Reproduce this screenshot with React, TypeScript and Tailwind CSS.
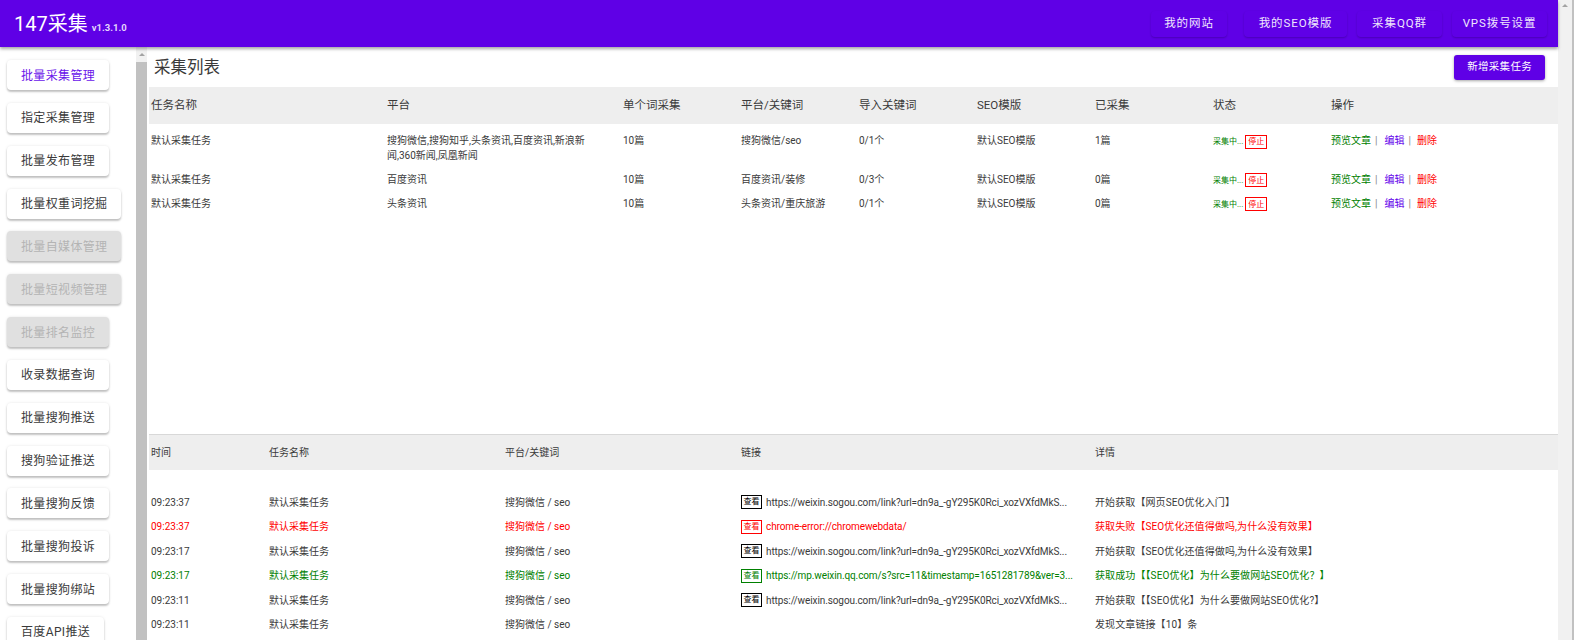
import { ReactNode } from 'react';

const sideItems = [
  { name: '批量采集管理', active: true },
  { name: '指定采集管理' },
  { name: '批量发布管理' },
  { name: '批量权重词挖掘' },
  { name: '批量自媒体管理', disabled: true },
  { name: '批量短视频管理', disabled: true },
  { name: '批量排名监控', disabled: true },
  { name: '收录数据查询' },
  { name: '批量搜狗推送' },
  { name: '搜狗验证推送' },
  { name: '批量搜狗反馈' },
  { name: '批量搜狗投诉' },
  { name: '批量搜狗绑站' },
  { name: '百度API推送' },
];

const topLinks = [
  { name: '我的网站', cls: 'w-[76px] mr-[7px]' },
  { name: '我的SEO模版', cls: 'w-[103px]' },
  { name: '采集QQ群', cls: 'w-[85px]' },
  { name: 'VPS拨号设置', cls: 'w-[95px]' },
];

const tasks = [
  { platform: '搜狗微信,搜狗知乎,头条资讯,百度资讯,新浪新闻,360新闻,凤凰新闻', keyword: '搜狗微信/seo', imported: '0/1个', got: '1篇', cls: 'pt-[9px] pb-[4px]' },
  { platform: '百度资讯', keyword: '百度资讯/装修', imported: '0/3个', got: '0篇', cls: 'py-[4.5px]' },
  { platform: '头条资讯', keyword: '头条资讯/重庆旅游', imported: '0/1个', got: '0篇', cls: 'py-[4.5px]' },
];

const logs = [
  { time: '09:23:37', kw: '搜狗微信 / seo', url: 'https://weixin.sogou.com/link?url=dn9a_-gY295K0Rci_xozVXfdMkS...', detail: '开始获取【网页SEO优化入门】', color: 'text-[#3a3a3a]', tag: 'border-black text-black' },
  { time: '09:23:37', kw: '搜狗微信 / seo', url: 'chrome-error://chromewebdata/', detail: '获取失败【SEO优化还值得做吗,为什么没有效果】', color: 'text-[#f00]', tag: 'border-[#f00] text-[#f00]' },
  { time: '09:23:17', kw: '搜狗微信 / seo', url: 'https://weixin.sogou.com/link?url=dn9a_-gY295K0Rci_xozVXfdMkS...', detail: '开始获取【SEO优化还值得做吗,为什么没有效果】', color: 'text-[#3a3a3a]', tag: 'border-black text-black' },
  { time: '09:23:17', kw: '搜狗微信 / seo', url: 'https://mp.weixin.qq.com/s?src=11&timestamp=1651281789&ver=3...', detail: '获取成功【【SEO优化】为什么要做网站SEO优化？】', color: 'text-[#008000]', tag: 'border-[#008000] text-[#008000]' },
  { time: '09:23:11', kw: '搜狗微信 / seo', url: 'https://weixin.sogou.com/link?url=dn9a_-gY295K0Rci_xozVXfdMkS...', detail: '开始获取【【SEO优化】为什么要做网站SEO优化?】', color: 'text-[#3a3a3a]', tag: 'border-black text-black' },
  { time: '09:23:11', kw: '搜狗微信 / seo', url: '', detail: '发现文章链接【10】条', color: 'text-[#3a3a3a]', tag: '' },
];

function Scrollbar({ children }: { children: ReactNode }) {
  return <div className="w-[14px] shrink-0 bg-[#f1f1f1] relative">{children}</div>;
}

function SideButton({ name, active, disabled }: { name: string; active?: boolean; disabled?: boolean }) {
  return (
    <div
      className={`h-[30px] shrink-0 self-start px-[14px] pt-[1px] flex items-center rounded-[4px] text-[12px] tracking-[0.35px] shadow-[0_2px_2px_rgba(0,0,0,0.22),0_0_3px_rgba(0,0,0,0.1)] ${
        disabled ? 'bg-[#e0e0e0] text-[#b4b4b4]' : active ? 'bg-white text-[#6a14ea]' : 'bg-white text-[#3a3a3a]'
      }`}
    >
      {name}
    </div>
  );
}

export default function App() {
  return (
    <div className="h-screen w-full flex overflow-hidden bg-white text-[#3a3a3a] font-['Roboto','Noto_Sans_CJK_SC',sans-serif]">
      <div className="flex-1 min-w-0 flex flex-col">
        <header className="h-[47px] shrink-0 bg-[#5f00e6] flex items-center justify-between pl-[14px] pr-[11px] shadow-[0_2px_3px_rgba(0,0,0,0.35)] z-10">
          <div className="flex items-baseline gap-[4px] text-white">
            <span className="text-[20px]">147采集</span>
            <span className="text-[9.5px] font-bold text-[#e4d6fb]">v1.3.1.0</span>
          </div>
          <div className="flex items-center gap-[10px] text-[11.5px] text-[#efe6fd] tracking-[0.9px]">
            {topLinks.map((l) => (
              <div key={l.name} className={`h-[26px] flex items-center justify-center rounded-[4px] shadow-[0_1px_2px_rgba(0,0,0,0.22)] ${l.cls}`}>
                {l.name}
              </div>
            ))}
          </div>
        </header>
        <div className="flex-1 min-h-0 flex">
          <aside className="w-[136px] shrink-0 overflow-hidden flex flex-col gap-[12.85px] pl-[7px] pt-[13px]">
            {sideItems.map((s) => (
              <SideButton key={s.name} {...s} />
            ))}
          </aside>
          <div className="w-[11px] shrink-0 bg-[#f1f1f1] flex flex-col items-center">
            <div className="h-[15px] flex items-center">
              <div className="w-0 h-0 border-x-[3px] border-x-transparent border-b-[3px] border-b-[#a3a3a3]" />
            </div>
            <div className="flex-1 w-full bg-[#c1c1c1]" />
          </div>
          <main className="flex-1 min-w-0 ml-[2px] flex flex-col overflow-hidden">
            <div className="h-[40px] shrink-0 flex items-center justify-between pl-[5px] pr-[13px]">
              <h1 className="text-[16.5px] font-normal pt-[3px]">采集列表</h1>
              <div className="h-[25px] px-[13px] flex items-center rounded-[3px] bg-[#5f00e6] text-white text-[10.5px] tracking-[0.3px] shadow-[0_1px_3px_rgba(0,0,0,0.35)]">
                新增采集任务
              </div>
            </div>
            <div className="h-[37px] shrink-0 bg-[#eeeeee] grid grid-cols-[repeat(12,118px)] items-center text-[11.5px] pl-[2px]">
              <div className="col-span-2">任务名称</div>
              <div className="col-span-2">平台</div>
              <div>单个词采集</div>
              <div>平台/关键词</div>
              <div>导入关键词</div>
              <div>SEO模版</div>
              <div>已采集</div>
              <div>状态</div>
              <div className="col-span-2">操作</div>
            </div>
            <div className="h-[310px] shrink-0 text-[10px] leading-[15px]">
              {tasks.map((t) => (
                <div key={t.platform} className={`grid grid-cols-[repeat(12,118px)] pl-[2px] ${t.cls}`}>
                  <div className="col-span-2">默认采集任务</div>
                  <div className="col-span-2 pr-[32px]">{t.platform}</div>
                  <div>10篇</div>
                  <div>{t.keyword}</div>
                  <div>{t.imported}</div>
                  <div>默认SEO模版</div>
                  <div>{t.got}</div>
                  <div className="flex items-center gap-[2px] text-[8px] text-[#008000] h-[15px] pt-[2px]">
                    采集中...
                    <span className="h-[14px] px-[2px] flex items-center border border-[#f00] text-[#f00] text-[8px]">停止</span>
                  </div>
                  <div className="col-span-2 flex items-center gap-[4px] h-[15px]">
                    <span className="text-[#008000]">预览文章</span>
                    <span className="text-[#888]">|</span>
                    <span className="text-[#6200ea] ml-[3px]">编辑</span>
                    <span className="text-[#888]">|</span>
                    <span className="text-[#f00] ml-[2px]">删除</span>
                  </div>
                </div>
              ))}
            </div>
            <div className="h-[36px] shrink-0 bg-[#eeeeee] border-t border-[#d8d8d8] grid grid-cols-[repeat(12,118px)] items-center text-[10px] pl-[2px]">
              <div>时间</div>
              <div className="col-span-2">任务名称</div>
              <div className="col-span-2">平台/关键词</div>
              <div className="col-span-3">链接</div>
              <div className="col-span-4">详情</div>
            </div>
            <div className="pt-[20px] flex flex-col text-[10px]">
              {logs.map((l, i) => (
                <div key={i} className={`h-[24.5px] shrink-0 grid grid-cols-[repeat(12,118px)] items-center pl-[2px] ${l.color}`}>
                  <div>{l.time}</div>
                  <div className="col-span-2">默认采集任务</div>
                  <div className="col-span-2">{l.kw}</div>
                  <div className="col-span-3 flex items-center gap-[4px] whitespace-nowrap tracking-[-0.1px]">
                    {l.url && (
                      <span className={`h-[14px] w-[21px] shrink-0 flex items-center justify-center border text-[8px] ${l.tag}`}>查看</span>
                    )}
                    {l.url}
                  </div>
                  <div className="col-span-4 whitespace-nowrap tracking-[0.1px]">{l.detail}</div>
                </div>
              ))}
            </div>
          </main>
        </div>
      </div>
      <Scrollbar>
        <div className="absolute top-[4px] left-[4px] w-0 h-0 border-x-[3px] border-x-transparent border-b-[3px] border-b-[#a3a3a3]" />
      </Scrollbar>
      <div className="w-[2px] shrink-0 bg-[#c1c1c1]" />
    </div>
  );
}
